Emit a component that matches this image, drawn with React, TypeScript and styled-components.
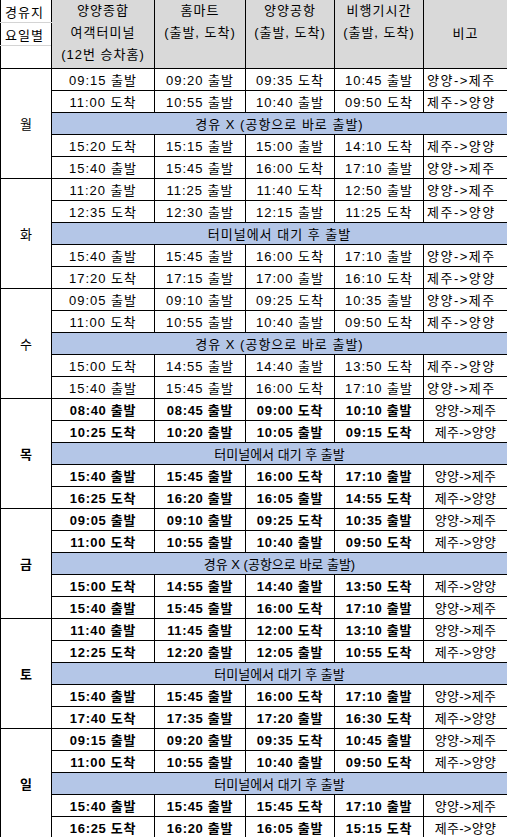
import styled, { createGlobalStyle } from 'styled-components'

type Row = [string, string, string, string, string]

interface DayBlock {
  day: string
  bold: boolean
  band: string
  before: Row[]
  after: Row[]
}

const DIRECT = '경유 X (공항으로 바로 출발)'
const WAIT = '터미널에서 대기 후 출발'

const schedule: DayBlock[] = [
  {
    day: '월',
    bold: false,
    band: DIRECT,
    before: [
      ['09:15 출발', '09:20 출발', '09:35 도착', '10:45 출발', '양양->제주'],
      ['11:00 도착', '10:55 출발', '10:40 출발', '09:50 도착', '제주->양양'],
    ],
    after: [
      ['15:20 도착', '15:15 출발', '15:00 출발', '14:10 도착', '제주->양양'],
      ['15:40 출발', '15:45 출발', '16:00 도착', '17:10 출발', '양양->제주'],
    ],
  },
  {
    day: '화',
    bold: false,
    band: WAIT,
    before: [
      ['11:20 출발', '11:25 출발', '11:40 도착', '12:50 출발', '양양->제주'],
      ['12:35 도착', '12:30 출발', '12:15 출발', '11:25 도착', '제주->양양'],
    ],
    after: [
      ['15:40 출발', '15:45 출발', '16:00 도착', '17:10 출발', '양양->제주'],
      ['17:20 도착', '17:15 출발', '17:00 출발', '16:10 도착', '제주->양양'],
    ],
  },
  {
    day: '수',
    bold: false,
    band: DIRECT,
    before: [
      ['09:05 출발', '09:10 출발', '09:25 도착', '10:35 출발', '양양->제주'],
      ['11:00 도착', '10:55 출발', '10:40 출발', '09:50 도착', '제주->양양'],
    ],
    after: [
      ['15:00 도착', '14:55 출발', '14:40 출발', '13:50 도착', '제주->양양'],
      ['15:40 출발', '15:45 출발', '16:00 도착', '17:10 출발', '양양->제주'],
    ],
  },
  {
    day: '목',
    bold: true,
    band: WAIT,
    before: [
      ['08:40 출발', '08:45 출발', '09:00 도착', '10:10 출발', '양양->제주'],
      ['10:25 도착', '10:20 출발', '10:05 출발', '09:15 도착', '제주->양양'],
    ],
    after: [
      ['15:40 출발', '15:45 출발', '16:00 도착', '17:10 출발', '양양->제주'],
      ['16:25 도착', '16:20 출발', '16:05 출발', '14:55 도착', '제주->양양'],
    ],
  },
  {
    day: '금',
    bold: true,
    band: DIRECT,
    before: [
      ['09:05 출발', '09:10 출발', '09:25 도착', '10:35 출발', '양양->제주'],
      ['11:00 도착', '10:55 출발', '10:40 출발', '09:50 도착', '제주->양양'],
    ],
    after: [
      ['15:00 도착', '14:55 출발', '14:40 출발', '13:50 도착', '제주->양양'],
      ['15:40 출발', '15:45 출발', '16:00 도착', '17:10 출발', '양양->제주'],
    ],
  },
  {
    day: '토',
    bold: true,
    band: WAIT,
    before: [
      ['11:40 출발', '11:45 출발', '12:00 도착', '13:10 출발', '양양->제주'],
      ['12:25 도착', '12:20 출발', '12:05 출발', '10:55 도착', '제주->양양'],
    ],
    after: [
      ['15:40 출발', '15:45 출발', '16:00 도착', '17:10 출발', '양양->제주'],
      ['17:40 도착', '17:35 출발', '17:20 출발', '16:30 도착', '제주->양양'],
    ],
  },
  {
    day: '일',
    bold: true,
    band: WAIT,
    before: [
      ['09:15 출발', '09:20 출발', '09:35 도착', '10:45 출발', '양양->제주'],
      ['11:00 도착', '10:55 출발', '10:40 출발', '09:50 도착', '제주->양양'],
    ],
    after: [
      ['15:40 출발', '15:45 출발', '15:45 도착', '17:10 출발', '양양->제주'],
      ['16:25 도착', '16:20 출발', '16:05 출발', '15:15 도착', '제주->양양'],
    ],
  },
]

function TimeCells({ row, bold }: { row: Row; bold: boolean }) {
  return (
    <>
      {row.slice(0, 4).map((t, i) => (
        <TimeCell key={i} $bold={bold}>
          {t}
        </TimeCell>
      ))}
      <NoteCell $centered={bold}>{row[4]}</NoteCell>
    </>
  )
}

function DayGroup({ block }: { block: DayBlock }) {
  return (
    <>
      <tr>
        <DayCell rowSpan={5} $bold={block.bold}>
          {block.day}
        </DayCell>
        <TimeCells row={block.before[0]} bold={block.bold} />
      </tr>
      <tr>
        <TimeCells row={block.before[1]} bold={block.bold} />
      </tr>
      <tr>
        <BandCell colSpan={5} $tight={block.bold}>
          {block.band}
        </BandCell>
      </tr>
      <tr>
        <TimeCells row={block.after[0]} bold={block.bold} />
      </tr>
      <tr>
        <TimeCells row={block.after[1]} bold={block.bold} />
      </tr>
    </>
  )
}

function App() {
  return (
    <>
      <GlobalStyle />
      <Table>
        <colgroup>
          <col style={{ width: 51 }} />
          <col style={{ width: 103 }} />
          <col style={{ width: 91 }} />
          <col style={{ width: 89 }} />
          <col style={{ width: 89 }} />
          <col style={{ width: 84 }} />
        </colgroup>
        <thead>
          <tr>
            <CornerCell>경유지</CornerCell>
            <HeadCell rowSpan={3}>
              양양종합
              <br />
              여객터미널
              <br />
              (12번 승차홈)
            </HeadCell>
            <HeadCell rowSpan={3}>
              홈마트
              <br />
              (출발, 도착)
            </HeadCell>
            <HeadCell rowSpan={3}>
              양양공항
              <br />
              (출발, 도착)
            </HeadCell>
            <HeadCell rowSpan={3}>
              비행기시간
              <br />
              (출발, 도착)
            </HeadCell>
            <HeadCell rowSpan={3} $middle>
              비고
            </HeadCell>
          </tr>
          <tr>
            <CornerCell>요일별</CornerCell>
          </tr>
          <tr>
            <CornerCell $last />
          </tr>
        </thead>
        <tbody>
          {schedule.map((block) => (
            <DayGroup key={block.day} block={block} />
          ))}
        </tbody>
      </Table>
    </>
  )
}

export default App

const GlobalStyle = createGlobalStyle`
  body {
    margin: 0;
    background: #ffffff;
    color: #000000;
    font-family: 'Liberation Sans', 'Noto Sans CJK KR', sans-serif;
  }
`

const Table = styled.table`
  width: 507px;
  table-layout: fixed;
  border-collapse: collapse;
  font-size: 13px;

  tr {
    height: 22px;
  }

  td,
  th {
    padding: 0;
    overflow: hidden;
    white-space: nowrap;
  }
`

const CornerCell = styled.th<{ $last?: boolean }>`
  height: 22px;
  background: #ffffff;
  font-weight: 400;
  text-align: left;
  padding-left: 4px !important;
  border-left: 1px solid #000000;
  border-right: 1px solid #000000;
  border-bottom: 1px solid ${(p) => (p.$last ? '#000000' : '#d4d4d4')};
  letter-spacing: 1px;
`

const HeadCell = styled.th<{ $middle?: boolean }>`
  background: #d9d9d9;
  font-weight: 400;
  text-align: center;
  vertical-align: ${(p) => (p.$middle ? 'middle' : 'top')};
  line-height: 22px;
  letter-spacing: 1px;
  border: 1px solid #000000;
  border-top: none;
`

const DayCell = styled.td<{ $bold: boolean }>`
  text-align: center;
  vertical-align: middle;
  font-weight: ${(p) => (p.$bold ? 700 : 400)};
  border: 1px solid #000000;
`

const TimeCell = styled.td<{ $bold: boolean }>`
  text-align: center;
  font-weight: ${(p) => (p.$bold ? 700 : 400)};
  letter-spacing: ${(p) => (p.$bold ? '0.7px' : '1px')};
  border: 1px solid #000000;
`

const NoteCell = styled.td<{ $centered: boolean }>`
  text-align: ${(p) => (p.$centered ? 'center' : 'left')};
  padding-left: ${(p) => (p.$centered ? '0' : '3px')} !important;
  letter-spacing: ${(p) => (p.$centered ? '0.3px' : '1.5px')};
  border: 1px solid #000000;
`

const BandCell = styled.td<{ $tight: boolean }>`
  background: #b4c6e7;
  text-align: center;
  letter-spacing: ${(p) => (p.$tight ? '0' : '1px')};
  border: 1px solid #000000;
`
